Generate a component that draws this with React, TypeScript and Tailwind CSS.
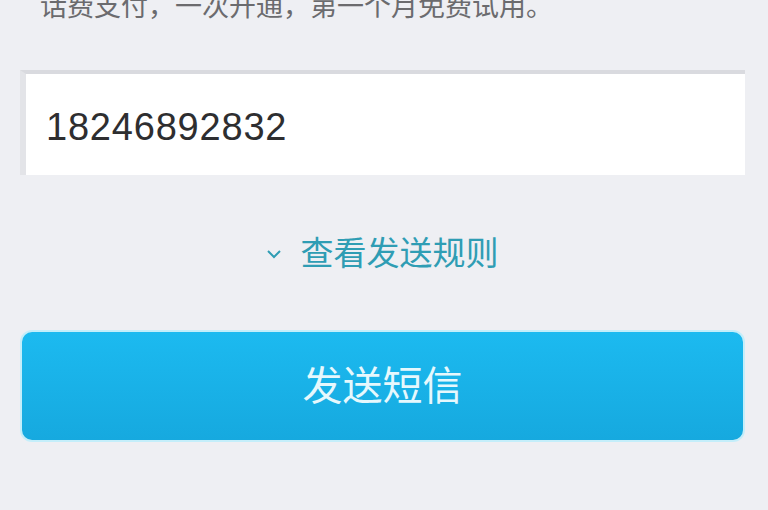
export default function App() {
  return (
    <div
      className="flex min-h-[510px] w-full flex-col overflow-hidden bg-[#eeeff3] pl-[22px] pr-[25px]"
      style={{ fontFamily: '"Liberation Sans", "Noto Sans CJK SC", sans-serif' }}
    >
      {/* Hint text, cut off by the top edge */}
      <p className="-mt-[8px] ml-[18px] whitespace-nowrap text-[27px] leading-[30px] text-[#6b6b6e]">
        话费支付，一次开通，第一个月免费试用。
      </p>

      {/* Phone number field */}
      <div className="-mx-[2px] mt-[48px] flex h-[105px] items-center border-t-4 border-l-[6px] border-t-[#d9dadf] border-l-[#e3e4e8] bg-white pl-[20px]">
        <span className="mt-[4px] text-[38px] leading-none tracking-[0.8px] text-[#2e2e30]">18246892832</span>
      </div>

      {/* Rules toggle */}
      <button className="mt-[63px] flex items-center justify-center gap-[20px] self-center text-[#2f9db4]">
        <svg width="14" height="10" viewBox="0 0 14 10" fill="none" stroke="currentColor" strokeWidth="2">
          <path d="M1 2l6 6 6-6" />
        </svg>
        <span className="text-[33px] leading-[32px]">查看发送规则</span>
      </button>

      {/* Send button */}
      <button className="mt-[62px] flex h-[108px] items-center justify-center rounded-[10px] bg-gradient-to-b from-[#1cbaf0] to-[#16a9df] shadow-[0_0_0_2px_#c4eefa]">
        <span className="text-[40px] leading-none text-[#e6f8fd]">发送短信</span>
      </button>
    </div>
  );
}
